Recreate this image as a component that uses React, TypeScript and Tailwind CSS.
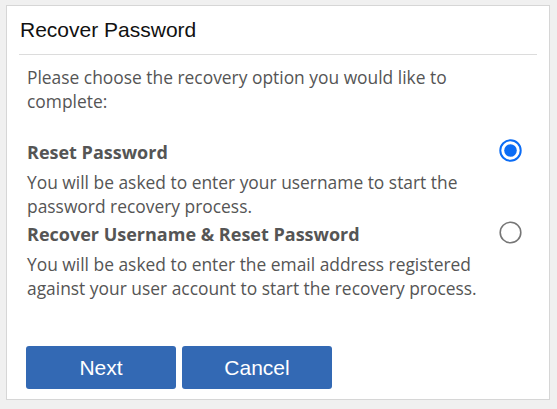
import React, { useState } from 'react';

type Option = 'reset' | 'recover';

const options: { id: Option; title: string; text: string }[] = [
  {
    id: 'reset',
    title: 'Reset Password',
    text: 'You will be asked to enter your username to start the password recovery process.',
  },
  {
    id: 'recover',
    title: 'Recover Username & Reset Password',
    text: 'You will be asked to enter the email address registered against your user account to start the recovery process.',
  },
];

const Radio: React.FC<{ checked: boolean }> = ({ checked }) => (
  <svg width="23" height="23" viewBox="0 0 23 23">
    {checked ? (
      <>
        <circle cx="11.5" cy="11.5" r="10.2" fill="white" stroke="#0b6cf5" strokeWidth="2" />
        <circle cx="11.5" cy="11.5" r="6.3" fill="#0b6cf5" />
      </>
    ) : (
      <circle cx="11.5" cy="11.5" r="10.3" fill="white" stroke="#767676" strokeWidth="1.6" />
    )}
  </svg>
);

const App: React.FC = () => {
  const [choice, setChoice] = useState<Option>('reset');

  return (
    <div className="min-h-[409px] w-[557px] bg-[#f0f0f0] pt-[5px] pl-[6px]">
      <div className="w-[544px] h-[395px] bg-white border border-[#d6d6d6] flex flex-col">
        {/* Header */}
        <div className="mx-[12px] h-[49px] border-b border-[#dcdcdc] flex items-center">
          <h1 className="pl-[1px] text-[21px] text-[#111] font-['Liberation_Sans',Arial,sans-serif]">
            Recover Password
          </h1>
        </div>

        {/* Body */}
        <div className="pl-[20px] pr-[12px] pt-[10px] font-['Open_Sans',sans-serif] text-[#555] text-[17.4px] leading-[24px]">
          <p className="pr-[30px]">Please choose the recovery option you would like to complete:</p>

          <div className="mt-[27px] flex flex-col gap-[4px]">
            {options.map(({ id, title, text }) => (
              <label key={id} className="flex cursor-pointer" onClick={() => setChoice(id)}>
                <div className="flex-1 pr-[6px]">
                  <div className="font-bold text-[18px]">{title}</div>
                  <p className="mt-[6px]">{text}</p>
                </div>
                <div className="pr-[15px] -mt-[1px]">
                  <Radio checked={choice === id} />
                </div>
              </label>
            ))}
          </div>
        </div>

        {/* Buttons */}
        <div className="mt-auto mb-[10px] px-[19px] flex gap-[6px]">
          {['Next', 'Cancel'].map((label) => (
            <button
              key={label}
              className="w-[150px] h-[43px] rounded-[3px] bg-[#3369b4] text-white text-[21px] font-['Liberation_Sans',Arial,sans-serif]"
            >
              {label}
            </button>
          ))}
        </div>
      </div>
    </div>
  );
};

export default App;
